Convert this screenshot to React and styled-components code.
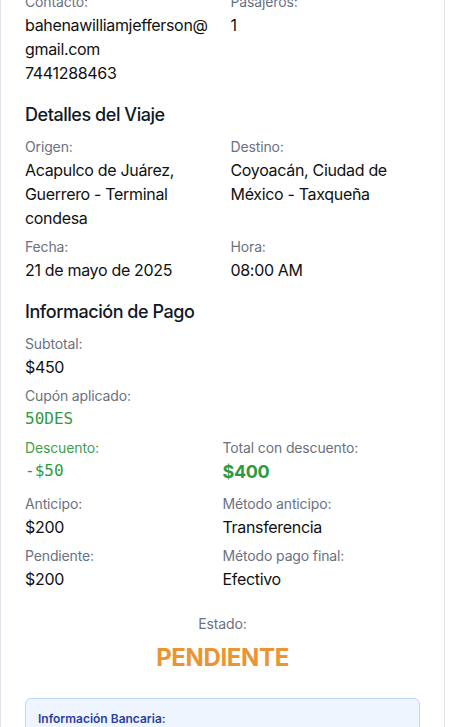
import React from "react";
import styled, { createGlobalStyle } from "styled-components";

const GlobalStyle = createGlobalStyle`
  html, body {
    margin: 0;
    padding: 0;
    background: #ffffff;
    overflow: hidden;
  }
  body {
    font-family: Inter, "Noto Sans", "Liberation Sans", sans-serif;
    color: #111827;
    -webkit-font-smoothing: antialiased;
  }
  * { box-sizing: border-box; }
`;

const Card = styled.div`
  width: 445px;
  margin-top: -9px;
  border: 1px solid #e2e3ea;
  background: #ffffff;
  padding: 0 24px 24px;
`;

const Section = styled.section`
  & + & {
    margin-top: 16px;
  }
`;

const Title = styled.h3`
  margin: 0 0 8px;
  font-size: 18px;
  line-height: 28px;
  font-weight: 500;
  letter-spacing: -0.025em;
  color: #111827;
`;

const Grid = styled.div`
  display: grid;
  grid-template-columns: 1fr 1fr;
  column-gap: ${(p) => p.$colGap ?? 16}px;
  row-gap: 7px;
`;

const Field = styled.div`
  grid-column: ${(p) => (p.$full ? "1 / -1" : "auto")};
  min-width: 0;
`;

const Label = styled.div`
  font-size: 14px;
  line-height: 20px;
  margin-bottom: 1px;
  letter-spacing: -0.01em;
  color: ${(p) => (p.$green ? "#3f9f4f" : "#6b7280")};
`;

const Value = styled.div`
  font-size: ${(p) => (p.$big ? 18 : 16)}px;
  line-height: ${(p) => (p.$big ? 26 : 24)}px;
  margin-bottom: ${(p) => (p.$big ? 2 : 0)}px;
  font-weight: ${(p) => (p.$big ? 700 : 400)};
  letter-spacing: ${(p) => (p.$mono ? "0" : "-0.02em")};
  color: ${(p) => (p.$green ? "#2f9a42" : "#111111")};
  font-family: ${(p) =>
    p.$mono
      ? '"DejaVu Sans Mono", "Liberation Mono", monospace'
      : 'Inter, "Noto Sans", "Liberation Sans", sans-serif'};
  overflow-wrap: anywhere;
`;

const Status = styled.div`
  margin-top: 23px;
  text-align: center;
`;

const StatusLabel = styled.div`
  font-size: 14px;
  line-height: 20px;
  letter-spacing: -0.01em;
  color: #6b7280;
`;

const StatusValue = styled.div`
  margin-top: 8px;
  font-size: 24px;
  line-height: 32px;
  font-weight: 700;
  letter-spacing: -0.015em;
  color: #eb9532;
`;

const BankBox = styled.div`
  margin-top: 24px;
  border: 1px solid #bfd6f6;
  background: #eef5ff;
  border-radius: 6px;
  padding: 12px;
  min-height: 60px;
`;

const BankTitle = styled.div`
  font-size: 12px;
  line-height: 16px;
  font-weight: 600;
  color: #2a3f9e;
`;

export default function App() {
  return (
    <>
      <GlobalStyle />
      <Card>
        <Section>
          <Grid>
            <Field>
              <Label>Contacto:</Label>
              <Value>
                bahenawilliamjefferson@<wbr />gmail.com
              </Value>
              <Value>7441288463</Value>
            </Field>
            <Field>
              <Label>Pasajeros:</Label>
              <Value>1</Value>
            </Field>
          </Grid>
        </Section>

        <Section>
          <Title>Detalles del Viaje</Title>
          <Grid>
            <Field>
              <Label>Origen:</Label>
              <Value>Acapulco de Juárez, Guerrero - Terminal condesa</Value>
            </Field>
            <Field>
              <Label>Destino:</Label>
              <Value>Coyoacán, Ciudad de México - Taxqueña</Value>
            </Field>
            <Field>
              <Label>Fecha:</Label>
              <Value>21 de mayo de 2025</Value>
            </Field>
            <Field>
              <Label>Hora:</Label>
              <Value>08:00 AM</Value>
            </Field>
          </Grid>
        </Section>

        <Section>
          <Title>Información de Pago</Title>
          <Grid $colGap={0}>
            <Field $full>
              <Label>Subtotal:</Label>
              <Value>$450</Value>
            </Field>
            <Field $full>
              <Label>Cupón aplicado:</Label>
              <Value $mono $green>
                50DES
              </Value>
            </Field>
            <Field>
              <Label $green>Descuento:</Label>
              <Value $mono $green>
                -$50
              </Value>
            </Field>
            <Field>
              <Label>Total con descuento:</Label>
              <Value $big $green>
                $400
              </Value>
            </Field>
            <Field>
              <Label>Anticipo:</Label>
              <Value>$200</Value>
            </Field>
            <Field>
              <Label>Método anticipo:</Label>
              <Value>Transferencia</Value>
            </Field>
            <Field>
              <Label>Pendiente:</Label>
              <Value>$200</Value>
            </Field>
            <Field>
              <Label>Método pago final:</Label>
              <Value>Efectivo</Value>
            </Field>
          </Grid>
          <Status>
            <StatusLabel>Estado:</StatusLabel>
            <StatusValue>PENDIENTE</StatusValue>
          </Status>
          <BankBox>
            <BankTitle>Información Bancaria:</BankTitle>
          </BankBox>
        </Section>
      </Card>
    </>
  );
}
